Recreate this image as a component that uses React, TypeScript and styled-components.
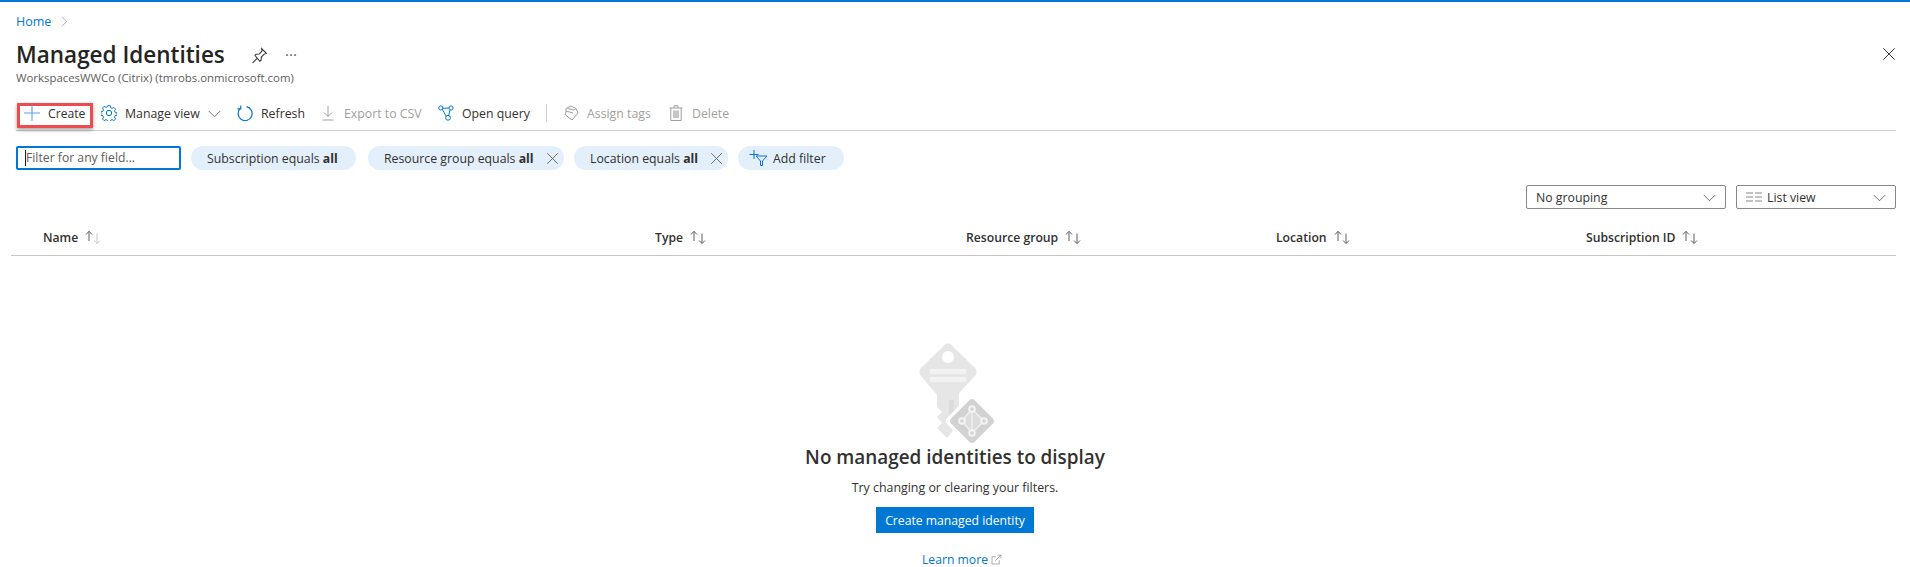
import React from "react";
import styled, { createGlobalStyle } from "styled-components";

const Global = createGlobalStyle`
  html, body { margin: 0; padding: 0; background: #fff; }
  body { font-family: "Open Sans", "Noto Sans", sans-serif; color: #323130; font-size: 12px; }
  * { box-sizing: border-box; }
`;
const Page = styled.div`
  width: 1910px; height: 567px; overflow: hidden; border-top: 2px solid #0078d4;
  display: flex; flex-direction: column;
`;
const Crumbs = styled.div`
  height: 28px; flex: none; padding: 10px 0 0 16px; display: flex; align-items: center; gap: 8px;
  color: #0078d4; font-size: 12.5px;
`;
const Header = styled.div`
  height: 62px; flex: none; padding: 0 16px 0 16px; position: relative;
`;
const TitleRow = styled.div`display: flex; align-items: center; height: 40px; padding-top: 10px;`;
const Title = styled.h1`
  margin: 0; font-size: 22.5px; font-weight: 600; color: #252423; line-height: 30px; width: 235px; white-space: nowrap;
`;
const More = styled.span`margin-left: 17px; color: #605e5c; font-size: 15px; letter-spacing: 0; line-height: 12px; position: relative; top: -1px;`;
const Sub = styled.div`font-size: 11.4px; color: #605e5c; line-height: 15px;`;
const CloseBtn = styled.span`position: absolute; right: 14px; top: 17px; display: flex; width: 14px; height: 14px;`;
const Toolbar = styled.div`
  margin: 0 14px 0 16px; height: 39px; flex: none; padding-top: 4px; border-bottom: 1px solid #d2d0ce; display: flex; align-items: center;
`;
const ToolItem = styled.div<{ $off?: boolean; $w: number }>`
  display: flex; align-items: center; gap: 8px; width: ${p => p.$w}px; white-space: nowrap;
  color: ${p => (p.$off ? "#a19f9d" : "#323130")}; font-size: 12.3px; height: 24px;
`;
const CreateBtn = styled.div`
  display: flex; align-items: center; gap: 8px; width: 76px; height: 25px; margin: 4px 8px 0 1px; padding: 0 0 4px 4px;
  border: 3px solid #f04a4f; box-shadow: 0 2px 4px rgba(0,0,0,.35); font-size: 12.2px; white-space: nowrap;
`;
const Sep = styled.span`width: 1px; height: 18px; background: #d2d0ce; margin: 0 16px 0 15px;`;
const Filters = styled.div`display: flex; align-items: center; height: 24px; flex: none; margin: 15px 0 0 16px;`;
const FilterInput = styled.div`
  width: 165px; height: 24px; border: 2px solid #0078d4; border-radius: 2px; color: #605e5c; font-size: 12.2px;
  display: flex; align-items: center; padding-left: 7px; margin-right: 10px; white-space: nowrap; line-height: 20px;
  &::before { content: ""; width: 1px; height: 16px; background: #201f1e; margin-right: 0; }
`;
const Pill = styled.div<{ $w: number; $mr: number }>`
  height: 24px; width: ${p => p.$w}px; margin-right: ${p => p.$mr}px; border-radius: 12px; background: #e3f0fb;
  display: flex; align-items: center; padding-left: 16px; gap: 12px; white-space: nowrap; color: #323130; font-size: 12.3px;
  b { font-weight: 700; }
`;
const AddPill = styled(Pill)`padding-left: 11px; gap: 5px;`;
const Selects = styled.div`display: flex; justify-content: flex-end; gap: 10px; margin: 15px 14px 0 0; height: 24px; flex: none;`;
const Select = styled.div<{ $w: number }>`
  width: ${p => p.$w}px; height: 24px; border: 1px solid #8a8886; border-radius: 2px; display: flex; align-items: center;
  justify-content: space-between; padding: 0 9px; font-size: 12.3px; color: #323130;
`;
const SelLabel = styled.span`display: flex; align-items: center; gap: 5px;`;
const TableHead = styled.div`
  margin: 13px 14px 0 11px; height: 34px; flex: none; border-bottom: 1px solid #c8c6c4; padding: 0 0 3px 32px;
  display: grid; grid-template-columns: 612px 311px 310px 310px 1fr; align-items: center;
`;
const Col = styled.div`display: flex; align-items: center; gap: 6px; font-weight: 600; font-size: 12.2px; color: #323130;`;
const Empty = styled.div`display: flex; flex-direction: column; align-items: center; padding: 87px 0 0 0; margin-left: 0;`;
const KeyWrap = styled.svg`flex: none; margin-left: 1px;`;
const EmptyTitle = styled.h2`margin: 2px 0 0; font-size: 18.9px; font-weight: 600; color: #323130; line-height: 24px; white-space: nowrap;`;
const EmptyText = styled.p`margin: 11px 0 0; font-size: 12.4px; line-height: 16px; color: #323130;`;
const Primary = styled.button`
  margin-top: 11px; width: 158px; height: 26px; border: 0; background: #0078d4; color: #fff; font: inherit; font-size: 12.2px; padding: 0;
`;
const Learn = styled.a`margin: 20px 0 0 14px; color: #0078d4; font-size: 12.2px; display: flex; align-items: center; gap: 3px; line-height: 13px;`;

const Ic = ({ size = 16, c = "currentColor", children, sw = 1 }: { size?: number; c?: string; children: React.ReactNode; sw?: number }) => (
  <svg width={size} height={size} viewBox="0 0 16 16" fill="none" stroke={c} strokeWidth={sw} style={{ flex: "none" }}>{children}</svg>
);
const X = ({ size = 13, c = "#605e5c" }: { size?: number; c?: string }) => (
  <Ic size={size} c={c} sw={1.1}><path d="M1.5 1.5l13 13M14.5 1.5l-13 13" /></Ic>
);
const Chev = ({ size = 13, c = "#605e5c" }: { size?: number; c?: string }) => (
  <Ic size={size} c={c} sw={1.1}><path d="M1 5l7 7 7-7" /></Ic>
);
const Sort = ({ dim }: { dim?: boolean }) => (
  <svg width="19" height="15" viewBox="0 0 19 15" fill="none" style={{ flex: "none" }}>
    <path d="M5 11V1.500M2 4.500L5 1.300 8 4.500" stroke="#605e5c" />
    <path d="M13 3.500v10M10 10.500l3 3 3-3" stroke={dim ? "#c8c6c4" : "#605e5c"} />
  </svg>
);
const KeyArt = () => (
  <KeyWrap width="76" height="100" viewBox="0 0 76 100">
    <path d="M27 1.500Q30 -1 33 1.500L57 25Q60 29 57 33L41 50V80L29 95L19 85L24 80L19 74L24 69L19 64V52L3 33Q0 29 3 25Z" fill="#e6e6e6" />
    <circle cx="30" cy="14" r="6" fill="#fff" />
    <rect x="12" y="26" width="36" height="5" fill="#f2f2f2" />
    <rect x="12" y="34" width="36" height="5" fill="#f2f2f2" />
    <path d="M31 57h5v20l-5 4z" fill="#dcdcdc" />
    <path d="M51 53L29 75Q26 78 29 81L51 103Q54 105 57 103L79 81Q81 78 79 75L57 53Q54 50 51 53Z" fill="#fff" />
    <path d="M51.500 57L33 75.500Q31 78 33 80.500L51.500 99Q54 101 56.500 99L75 80.500Q77 78 75 75.500L56.500 57Q54 55 51.500 57Z" fill="#d2d2d2" />
    <path d="M54 66L44 78L54 90L66 78Z" fill="#dcdcdc" stroke="#efefef" strokeWidth="1.500" />
    <path d="M54 66V90" stroke="#efefef" strokeWidth="1.500" />
    <g fill="#d2d2d2" stroke="#f4f4f4" strokeWidth="2"><circle cx="54" cy="66" r="2.800" /><circle cx="44" cy="78" r="2.800" /><circle cx="66" cy="78" r="2.800" /><circle cx="54" cy="90" r="2.800" /></g>
  </KeyWrap>
);

export default function App() {
  return (
    <Page>
      <Global />
      <Crumbs>Home<Ic size={11} c="#8a8886"><path d="M4.500 1.500l7 6.500-7 6.500" /></Ic></Crumbs>
      <Header>
        <TitleRow>
          <Title>Managed Identities</Title>
          <Ic size={17} c="#323130"><path d="M10 1.500l4.500 4.500-2 .7-2.800 2.800-.2 3-1.200 1L3.800 8l1-1.200 3-.2 2.500-2.800zM6 10.500L1.500 15" /></Ic>
          <More>···</More>
        </TitleRow>
        <Sub>WorkspacesWWCo (Citrix) (tmrobs.onmicrosoft.com)</Sub>
        <CloseBtn><X size={14} c="#323130" /></CloseBtn>
      </Header>
      <Toolbar>
        <CreateBtn>
          <Ic c="#5ea0ef" sw={1.100}><path d="M8 0v16M0 8h16" /></Ic>Create
        </CreateBtn>
        <ToolItem $w={136}>
          <Ic c="#0078d4"><circle cx="8" cy="8" r="2.700" /><path d="M6.800 .7h2.400l.4 2 1.500.7 1.800-1 1.600 1.700-1 1.700.6 1.500 2 .5v2.400l-2 .5-.6 1.500 1 1.800-1.600 1.600-1.800-1-1.500.6-.4 2H6.800l-.4-2-1.500-.6-1.800 1-1.600-1.600 1-1.800-.6-1.500-2-.5V6.800l2-.5.6-1.500-1-1.700 1.600-1.700 1.800 1 1.500-.7z" /></Ic>
          Manage view
          <Chev />
        </ToolItem>
        <ToolItem $w={83}>
          <Ic c="#0078d4" sw={1.200}><path d="M9.500 1.200A7 7 0 1 1 3.500 2.800M3.800 0v3.400H.4" transform="translate(0 .5)" /></Ic>
          Refresh
        </ToolItem>
        <ToolItem $w={118} $off>
          <Ic c="#a19f9d"><path d="M8 1v10M4 7.500L8 11.500l4-4M2.500 15h11" /></Ic>
          Export to CSV
        </ToolItem>
        <ToolItem $w={93}>
          <Ic c="#0078d4"><circle cx="2.800" cy="3" r="2.100" /><circle cx="13" cy="3" r="2.100" /><circle cx="10" cy="12.800" r="2.400" /><path d="M4.900 3.300L11 3M4.500 4.500L8 11M12 5l-1.300 5.500" /></Ic>
          Open query
        </ToolItem>
        <Sep />
        <ToolItem $w={105} $off>
          <Ic c="#a19f9d"><path d="M3 6V3.500L8 1l5 2.500L15 8 9 15 2.500 10zM4.500 3.500L11 5M3 6l7 2M13 3.500l-2 1.500" /></Ic>
          Assign tags
        </ToolItem>
        <ToolItem $w={70} $off>
          <Ic c="#a19f9d"><path d="M1.500 3h13M6 3V.8h4V3M2.800 3v12.500h10.400V3" /><rect x="5" y="5.500" width="6" height="7.500" fill="#c8c6c4" stroke="none" /></Ic>
          Delete
        </ToolItem>
      </Toolbar>
      <Filters>
        <FilterInput>Filter for any field...</FilterInput>
        <Pill $w={165} $mr={12}><span>Subscription equals <b>all</b></span></Pill>
        <Pill $w={196} $mr={10}><span>Resource group equals <b>all</b></span><X /></Pill>
        <Pill $w={154} $mr={10}><span>Location equals <b>all</b></span><X /></Pill>
        <AddPill $w={106} $mr={0}>
          <svg width="19" height="16" viewBox="0 0 19 16" fill="none" stroke="#0f6cd8" style={{ flex: "none" }}>
            <path d="M5 0v9M.5 4.500h9M7 6h11l-4.500 5v4.500h-2V11z" />
          </svg>
          Add filter
        </AddPill>
      </Filters>
      <Selects>
        <Select $w={200}>No grouping<Chev /></Select>
        <Select $w={160}>
          <SelLabel>
            <svg width="16" height="10" viewBox="0 0 16 10" stroke="#8a8886"><path d="M0 1h7M0 5h7M0 9h7M9 1h7M9 5h7M9 9h7" /></svg>
            List view
          </SelLabel>
          <Chev />
        </Select>
      </Selects>
      <TableHead>
        <Col>Name<Sort dim /></Col>
        <Col>Type<Sort /></Col>
        <Col>Resource group<Sort /></Col>
        <Col>Location<Sort /></Col>
        <Col>Subscription ID<Sort /></Col>
      </TableHead>
      <Empty>
        <KeyArt />
        <EmptyTitle>No managed identities to display</EmptyTitle>
        <EmptyText>Try changing or clearing your filters.</EmptyText>
        <Primary>Create managed identity</Primary>
        <Learn>Learn more
          <Ic size={11} c="#8a8886"><path d="M12 9v5.500H1.500V4H7M6 10L14.500 1.500M9.500 1.500h5v5" /></Ic>
        </Learn>
      </Empty>
    </Page>
  );
}
